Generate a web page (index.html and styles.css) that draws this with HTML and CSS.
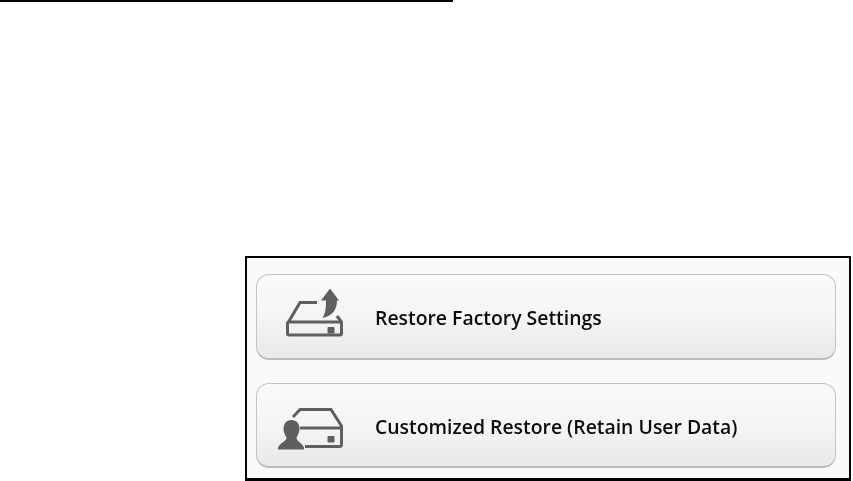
FILE: index.html
```html
<!DOCTYPE html>
<html lang="en">
<head>
    <meta charset="UTF-8">
    <title>Restore</title>
    <link rel="stylesheet" href="styles.css">
</head>
<body>
    <div class="top-rule"></div>

    <div class="panel">
        <div class="option">
            <svg class="option-icon" viewBox="0 0 64 60" width="64" height="60">
                <path class="line" d="M37 16.500H20L8.500 36M57 30L61.500 36V47.500Q61.500 49 60 49H9Q7.500 49 7.500 47.500V37Q7.500 36 9 36H60Q61.500 36 61.500 37"/>
                <rect class="solid" x="47.500" y="41" width="7" height="6.500" rx="1"/>
                <path class="solid" d="M50 2.500L59 14.500H57C57 23 53 30 42.500 32C45.500 27 46 22 46 14.500H41Z"/>
            </svg>
            <span class="option-label">Restore Factory Settings</span>
        </div>
        <div class="option option-low">
            <svg class="option-icon" viewBox="0 0 64 60" width="64" height="60">
                <path class="line" d="M13 22L20 14.500H51L61.500 31V49.500Q61.500 51.500 59.500 51.500H25M20 33H61.500"/>
                <rect class="solid" x="47.500" y="41" width="7" height="6.500" rx="1"/>
                <path class="solid" d="M11.500 25C17 25 19.500 29 19.500 34C19.500 38 17 41 16.500 43C16.500 46 22 48 24 52.500V54.500H-2V52.500C0 48 6.500 46 6.500 43C6 41 3.500 38 3.500 34C3.500 29 6 25 11.500 25Z"/>
            </svg>
            <span class="option-label">Customized Restore (Retain User Data)</span>
        </div>
    </div>
</body>
</html>
```

FILE: styles.css
```css
body {
    margin: 0;
    background: white;
    font-family: 'Open Sans', 'Noto Sans', Arial, sans-serif;
}

.top-rule {
    width: 453px;
    height: 2px;
    background: black;
}

.panel {
    box-sizing: border-box;
    width: 606px;
    height: 225px;
    margin: 254px 0 0 245px;
    padding: 16px 13px 10px 9px;
    display: flex;
    flex-direction: column;
    gap: 23px;
    background: #fafafa;
    border: 2px solid black;
    border-bottom-width: 3px;
}

.option {
    box-sizing: border-box;
    flex: 1;
    display: flex;
    align-items: center;
    gap: 31px;
    padding-left: 23px;
    background: linear-gradient(#fafafa 0%, #f5f5f5 50%, #e9e9e9 100%);
    border: 1px solid #c4c4c4;
    border-bottom: 2px solid #bcbcbc;
    border-radius: 13px;
}

.option-icon {
    flex: none;
    overflow: visible;
    filter: blur(0.5px);
}

.line {
    fill: none;
    stroke: #5f5f5f;
    stroke-width: 3;
}

.solid {
    fill: #5f5f5f;
}

.option-label {
    padding-top: 2px;
    font-size: 19.4px;
    font-weight: 600;
    color: #0c0c0c;
    filter: blur(0.25px);
}

.option-low .option-label {
    padding-top: 4px;
}
```
